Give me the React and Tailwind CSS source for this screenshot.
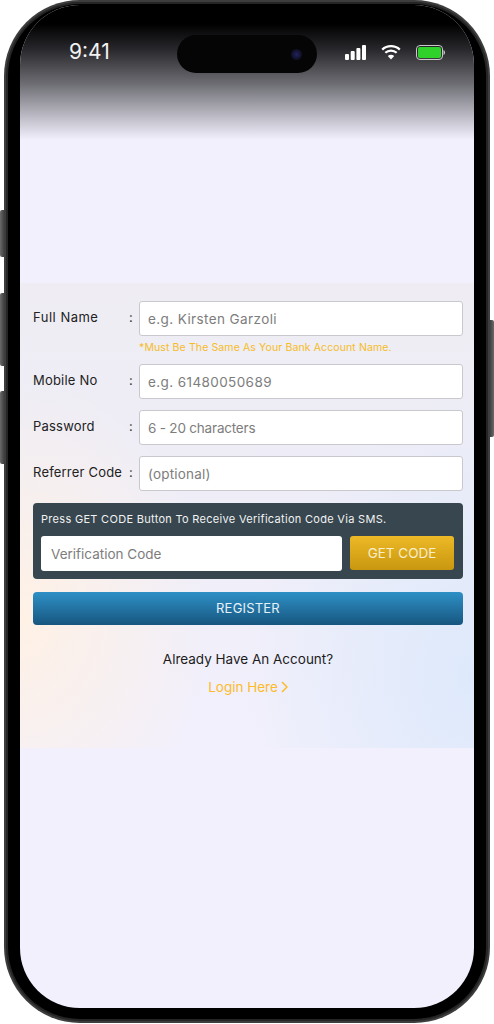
function Field({ label, placeholder, hint, className = "", labelClass = "tracking-[0.2px]", inputClass = "" }) {
  return (
    <div className={className}>
      <div className="flex items-start">
        <label className={`w-[96px] shrink-0 pt-[7px] text-[13px] leading-[18px] text-[#222] ${labelClass}`}>{label}</label>
        <span className="w-[10px] shrink-0 pt-[7px] text-[13px] leading-[18px] text-[#333]">:</span>
        <input
          placeholder={placeholder}
          className={`h-[35px] min-w-0 flex-1 rounded-[3px] border border-[#c9c9cd] bg-white px-[8px] text-[13.5px] text-[#333] outline-none placeholder:text-[#7d7d7d] ${inputClass}`}
        />
      </div>
      {hint && <p className="mt-[5px] pl-[106px] text-[10.5px] leading-[13px] tracking-[0.12px] text-[#f6bc26]">{hint}</p>}
    </div>
  );
}

function Signal() {
  return (
    <svg width="21" height="15" viewBox="0 0 21 15" fill="#fff">
      <rect x="0" y="9" width="4" height="6" rx="1" />
      <rect x="5.700" y="6" width="4" height="9" rx="1" />
      <rect x="11.400" y="3" width="4" height="12" rx="1" />
      <rect x="17" y="0" width="4" height="15" rx="1" />
    </svg>
  );
}

function Wifi() {
  return (
    <svg width="20" height="16" viewBox="0 0 20 16" fill="none" stroke="#fff" strokeWidth="2.200">
      <path d="M1.200 5.600C6 1 14 1 18.800 5.600" />
      <path d="M4.300 8.800C7.500 5.800 12.500 5.800 15.700 8.800" />
      <path d="M10 15.500 6.800 11.900C8.600 10.300 11.400 10.300 13.200 11.900Z" fill="#fff" stroke="none" />
    </svg>
  );
}

function Battery() {
  return (
    <svg width="29" height="15" viewBox="0 0 29 15">
      <rect x="0.500" y="0.500" width="26" height="14" rx="3.500" fill="none" stroke="#c9c9c9" />
      <rect x="2" y="2" width="23" height="11" rx="2" fill="#2fd12b" />
      <path d="M27.500 5v5c.9-.3 1.500-1.300 1.500-2.500S28.400 5.300 27.500 5Z" fill="#c9c9c9" />
    </svg>
  );
}

export default function App() {
  return (
    <div className="relative h-[1024px] w-[494px] overflow-hidden bg-white font-['Inter',sans-serif]">
      <div className="absolute left-0 top-[210px] h-[47px] w-[6px] rounded-l-[2px] bg-[linear-gradient(90deg,#6a6a6a,#2c2c2c)]" />
      <div className="absolute left-0 top-[293px] h-[73px] w-[6px] rounded-l-[2px] bg-[linear-gradient(90deg,#6a6a6a,#2c2c2c)]" />
      <div className="absolute left-0 top-[391px] h-[73px] w-[6px] rounded-l-[2px] bg-[linear-gradient(90deg,#6a6a6a,#2c2c2c)]" />
      <div className="absolute right-0 top-[320px] h-[117px] w-[6px] rounded-r-[2px] bg-[linear-gradient(270deg,#6a6a6a,#2c2c2c)]" />

      <div className="relative ml-[4px] h-[1023px] w-[486px] rounded-[76px] bg-[#3d3d3d] p-[2px]">
        <div className="h-full w-full rounded-[74px] bg-[#252525] p-[2px]">
          <div className="h-full w-full rounded-[72px] bg-black pb-[11px] pl-[12px] pr-[12px] pt-[1px]">
            <div className="relative flex h-full flex-col overflow-hidden rounded-[60px] bg-[#f2f0fd]">
              <header className="h-[135px] shrink-0 bg-[linear-gradient(180deg,#000_0%,#000_14%,#26262a_32%,#6c6c72_58%,#b4b3bd_80%,#f2f0fd_100%)]">
                <div className="flex items-center pl-[49px] pr-[29px] pt-[34px]">
                  <span className="text-[21px] leading-[26px] text-[#f2f2f2]">9:41</span>
                  <div className="ml-auto flex items-center gap-[15px]">
                    <Signal />
                    <Wifi />
                    <Battery />
                  </div>
                </div>
              </header>

              <div className="absolute left-[157px] top-[30px] flex h-[38px] w-[140px] items-center justify-end rounded-full bg-[#050505] pr-[15px]">
                <span className="h-[11px] w-[11px] rounded-full bg-[radial-gradient(circle,#23245c_0%,#12122e_55%,#08080f_100%)]" />
              </div>

              <div className="h-[143px] shrink-0" />

              <main className="h-[465px] shrink-0 bg-[radial-gradient(ellipse_230px_290px_at_100%_85%,#dde9fb_0%,rgba(221,233,251,0)_100%),radial-gradient(ellipse_190px_240px_at_0%_72%,#fff1e5_0%,rgba(255,241,229,0)_100%),linear-gradient(180deg,#efedf3_0%,#eeedf6_30%,#f2f0fc_100%)] pl-[13px] pr-[11px] pt-[18px]">
                <Field labelClass="tracking-[0.5px]" inputClass="tracking-[0.4px]" label="Full Name" placeholder="e.g. Kirsten Garzoli" hint="*Must Be The Same As Your Bank Account Name." />
                <Field className="mt-[10px]" inputClass="tracking-[0.4px]" label="Mobile No" placeholder="e.g. 61480050689" />
                <Field className="mt-[11px]" inputClass="tracking-[-0.2px]" label="Password" placeholder="6 - 20 characters" />
                <Field className="mt-[11px]" inputClass="tracking-[0.2px]" label="Referrer Code" placeholder="(optional)" />

                <section className="mt-[12px] h-[76px] rounded-[4px] bg-[#37464f] pl-[8px] pr-[9px] pt-[8px]">
                  <p className="text-[11px] leading-[16px] tracking-[0.3px] text-[#f2f2f2]">Press GET CODE Button To Receive Verification Code Via SMS.</p>
                  <div className="mt-[9px] flex gap-[8px]">
                    <input
                      placeholder="Verification Code"
                      className="h-[35px] min-w-0 flex-1 rounded-[3px] bg-white px-[10px] text-[13.5px] outline-none placeholder:text-[#7d7d7d]"
                    />
                    <button className="h-[34px] w-[104px] shrink-0 rounded-[3px] bg-[linear-gradient(180deg,#edb927,#c9970f)] text-[13.5px] text-[#f7eecb]">GET CODE</button>
                  </div>
                </section>

                <button className="mt-[13px] h-[33px] w-full rounded-[4px] bg-[linear-gradient(180deg,#2e90c6,#17567f)] text-[13px] tracking-[0.2px] text-[#e8f1f6]">REGISTER</button>

                <p className="mt-[24px] text-center text-[13.5px] leading-[20px] text-[#1c1c1c]">Already Have An Account?</p>
                <a className="mt-[8px] flex items-center justify-center gap-[3px] text-[13.5px] leading-[20px] text-[#fdbb2a]">
                  Login Here
                  <svg width="7" height="12" viewBox="0 0 7 12" fill="none" stroke="#fdbb2a" strokeWidth="1.500">
                    <path d="M1 1l5 5-5 5" />
                  </svg>
                </a>
              </main>
            </div>
          </div>
        </div>
      </div>
    </div>
  );
}
